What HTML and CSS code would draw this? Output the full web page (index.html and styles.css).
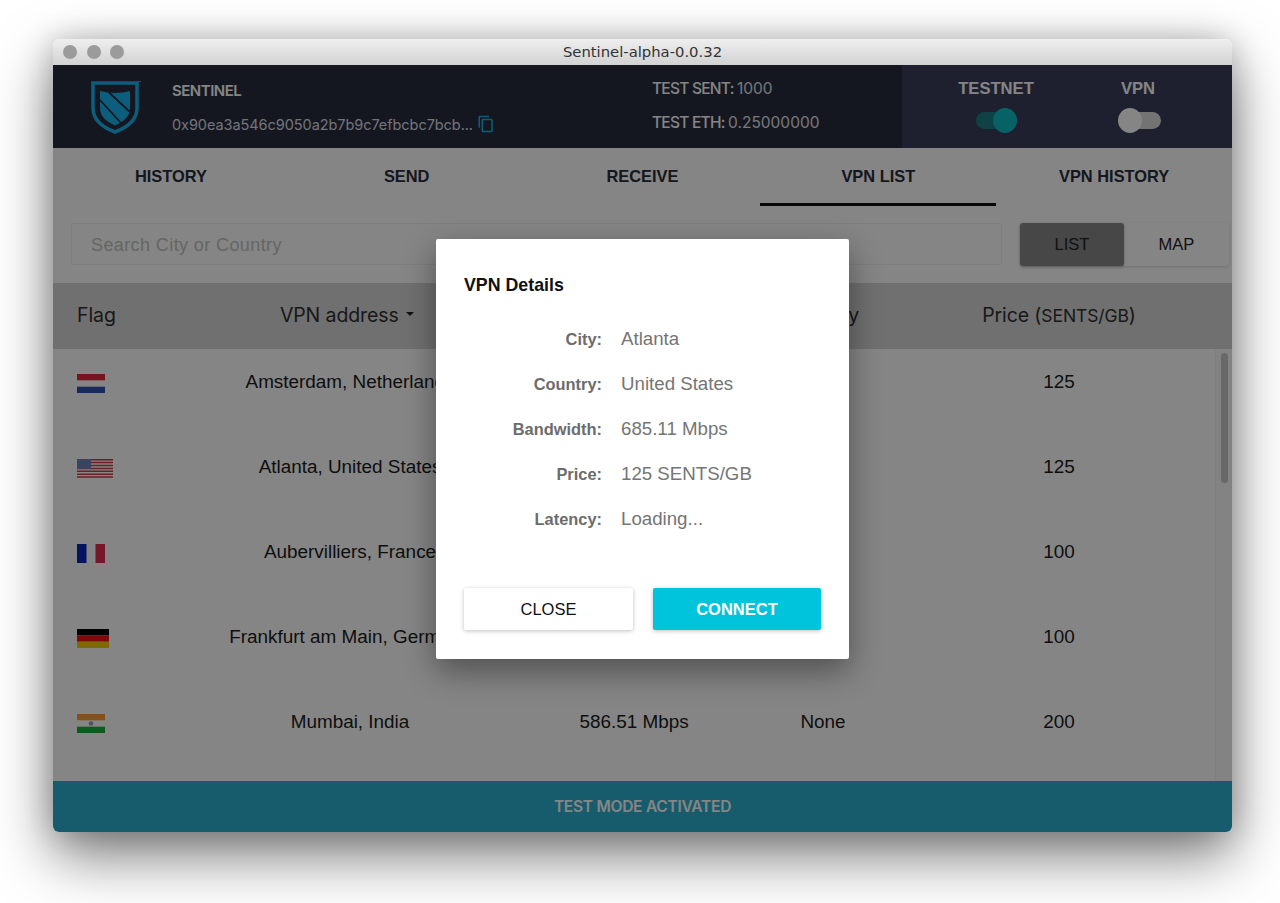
FILE: index.html
```html
<!DOCTYPE html>
<html lang="en">
<head>
<meta charset="utf-8">
<title>Sentinel-alpha-0.0.32</title>
<link rel="stylesheet" href="styles.css">
</head>
<body>
<div class="window">
  <div class="titlebar">
    <div class="lights"><span></span><span></span><span></span></div>
    <div class="title">Sentinel-alpha-0.0.32</div>
  </div>
  <div class="app">
    <header class="header">
      <div class="hdr-main">
        <svg class="logo" viewBox="0 0 50 54">
          <path class="logo-outer" d="M2 3H46V28C46 40 36 47.500 24 52C12 47.500 2 40 2 28Z"/>
          <path class="logo-inner" d="M9 11Q24 15 39 11V28C39 37 32 42 24 45.500C16 42 9 37 9 28Z"/>
          <path class="logo-cut" d="M9 20L30 43M18 12.500L39 32"/>
          <path class="logo-tm" d="M47 1.500H50"/>
        </svg>
        <div class="account">
          <div class="acc-name">SENTINEL</div>
          <div class="acc-addr"><span>0x90ea3a546c9050a2b7b9c7efbcbc7bcb...</span>
            <svg class="copy" viewBox="0 0 24 24"><path d="M16 1H4c-1.100 0-2 .9-2 2v14h2V3h12V1zm3 4H8c-1.100 0-2 .9-2 2v14c0 1.100.9 2 2 2h11c1.100 0 2-.9 2-2V7c0-1.100-.9-2-2-2zm0 16H8V7h11v14z"/></svg>
          </div>
        </div>
        <div class="balances">
          <div>TEST SENT: <span class="bal-val">1000</span></div>
          <div>TEST ETH: <span class="bal-val">0.25000000</span></div>
        </div>
      </div>
      <div class="hdr-side">
        <div class="switch-col">
          <div class="switch-label">TESTNET</div>
          <div class="toggle on"><i></i></div>
        </div>
        <div class="switch-col">
          <div class="switch-label">VPN</div>
          <div class="toggle"><i></i></div>
        </div>
      </div>
    </header>

    <nav class="tabs">
      <div class="tab">HISTORY</div>
      <div class="tab">SEND</div>
      <div class="tab">RECEIVE</div>
      <div class="tab active">VPN LIST</div>
      <div class="tab">VPN HISTORY</div>
    </nav>

    <div class="toolbar">
      <div class="search">Search City or Country</div>
      <div class="seg">
        <div class="seg-btn seg-on">LIST</div>
        <div class="seg-btn">MAP</div>
      </div>
    </div>

    <div class="thead grid">
      <div class="th-flag">Flag</div>
      <div class="th-addr">VPN address <b class="caret"></b></div>
      <div>Bandwidth</div>
      <div>Latency</div>
      <div>Price (<span class="th-unit">SENTS/GB</span>)</div>
    </div>

    <div class="list">
      <div class="rows">
        <div class="row grid">
          <div class="flag-cell"><svg class="flag f-nl" viewBox="0 0 28 19"><rect width="28" height="6.300" fill="#e02a3c"/><rect y="12.700" width="28" height="6.300" fill="#2f4fae"/></svg></div>
          <div>Amsterdam, Netherlands</div><div></div><div></div><div>125</div>
        </div>
        <div class="row grid">
          <div class="flag-cell"><svg class="flag f-us" viewBox="0 0 36 19"><rect width="36" height="19" fill="#fff"/><path d="M0 .7H36M0 3.600H36M0 6.500H36M0 9.400H36M0 12.300H36M0 15.200H36M0 18.100H36" stroke="#c9404e" stroke-width="1.500"/><rect width="14" height="10" fill="#737fb8"/></svg></div>
          <div>Atlanta, United States</div><div></div><div></div><div>125</div>
        </div>
        <div class="row grid">
          <div class="flag-cell"><svg class="flag f-fr" viewBox="0 0 28 19"><rect width="9.500" height="19" fill="#0a26b8"/><rect x="18.500" width="9.500" height="19" fill="#e02c50"/></svg></div>
          <div>Aubervilliers, France</div><div></div><div></div><div>100</div>
        </div>
        <div class="row grid">
          <div class="flag-cell"><svg class="flag f-de" viewBox="0 0 32 19"><rect width="32" height="6.400" fill="#000"/><rect y="6.300" width="32" height="6.400" fill="#ee1414"/><rect y="12.700" width="32" height="6.300" fill="#f2cc00"/></svg></div>
          <div>Frankfurt am Main, Germany</div><div></div><div></div><div>100</div>
        </div>
        <div class="row grid">
          <div class="flag-cell"><svg class="flag f-in" viewBox="0 0 28 19"><rect width="28" height="6.300" fill="#ff9933"/><circle cx="14" cy="9.500" r="2.300" fill="#9a9ab8"/><rect y="12.700" width="28" height="6.300" fill="#1cb038"/></svg></div>
          <div>Mumbai, India</div><div>586.51 Mbps</div><div>None</div><div>200</div>
        </div>
      </div>
      <div class="scroll"><div class="thumb"></div></div>
    </div>

    <footer class="foot">TEST MODE ACTIVATED</footer>

    <div class="overlay">
      <div class="modal">
        <h2 class="m-title">VPN Details</h2>
        <dl class="m-list">
          <dt>City:</dt><dd>Atlanta</dd>
          <dt>Country:</dt><dd>United States</dd>
          <dt>Bandwidth:</dt><dd>685.11 Mbps</dd>
          <dt>Price:</dt><dd>125 SENTS/GB</dd>
          <dt>Latency:</dt><dd>Loading...</dd>
        </dl>
        <div class="m-actions">
          <div class="btn btn-close">CLOSE</div>
          <div class="btn btn-go">CONNECT</div>
        </div>
      </div>
    </div>
  </div>
</div>
</body>
</html>
```
FILE: styles.css
```css
* { box-sizing: border-box; }
html, body { margin: 0; height: 100%; }
body {
  background: #fff;
  padding: 39px 48px 0 53px;
  overflow: hidden;
  font-family: "Liberation Sans", Arial, sans-serif;
}
.window {
  width: 1179px;
  height: 793px;
  display: flex;
  flex-direction: column;
  border-radius: 6px;
  box-shadow: 0 24px 58px rgba(0, 0, 0, .52), 0 0 30px rgba(0, 0, 0, .2);
}
.titlebar {
  height: 26px;
  flex: none;
  padding-bottom: 2px;
  position: relative;
  display: flex;
  align-items: center;
  justify-content: center;
  border-radius: 6px 6px 0 0;
  background: linear-gradient(#efefef, #d2d2d2);
}
.lights {
  position: absolute;
  left: 10px;
  top: 6px;
  display: flex;
  gap: 9.500px;
}
.lights span {
  width: 14px;
  height: 14px;
  border-radius: 50%;
  background: #9b9b9b;
}
.title {
  font: 14.800px "DejaVu Sans", sans-serif;
  color: #333;
}
.app {
  flex: 1;
  position: relative;
  display: flex;
  flex-direction: column;
  min-height: 0;
  background: #fff;
  border-radius: 0 0 6px 6px;
  overflow: hidden;
}

/* header */
.header {
  height: 83px;
  flex: none;
  display: flex;
  color: #fff;
  font-family: Inter, sans-serif;
}
.hdr-main {
  width: 849px;
  display: flex;
  align-items: flex-start;
  padding-left: 38px;
  background: #272c3e;
}
.logo {
  width: 50px;
  height: 54px;
  margin-top: 15px;
  flex: none;
}
.logo-outer { fill: none; stroke: #19b4f0; stroke-width: 3.500; }
.logo-inner { fill: #19b4f0; }
.logo-cut { fill: none; stroke: #272c3e; stroke-width: 1.800; }
.logo-tm { fill: none; stroke: #19b4f0; stroke-width: 1; }
.account {
  width: 480px;
  margin-left: 31px;
  padding-top: 16px;
}
.acc-name {
  font-size: 15px;
  font-weight: 600;
  line-height: 20px;
  letter-spacing: -.5px;
}
.acc-addr {
  display: flex;
  align-items: center;
  gap: 4px;
  margin-top: 13px;
  height: 20px;
  font-size: 14.500px;
  color: #dcdee6;
  letter-spacing: -.06px;
}
.copy { width: 18px; height: 18px; fill: #19b4f0; flex: none; }
.balances {
  padding-top: 14px;
  font-size: 15.500px;
  font-weight: 500;
  line-height: 20px;
  letter-spacing: -.75px;
}
.balances > div + div { margin-top: 14px; }
.bal-val { font-weight: 400; color: #e4e5ea; letter-spacing: 0; }
.hdr-side {
  flex: 1;
  display: grid;
  grid-template-columns: 188px 96px;
  background: #3a3e5c;
}
.switch-col {
  display: flex;
  flex-direction: column;
  align-items: center;
  padding-top: 14px;
}
.switch-label {
  font-family: "Liberation Sans", sans-serif;
  font-size: 16.600px;
  font-weight: 700;
  line-height: 20px;
  color: #fff;
}
.toggle {
  width: 41px;
  height: 17px;
  margin: 13px 0 0 5px;
  position: relative;
  border-radius: 9px;
  background: #dcdcdc;
}
.toggle i {
  position: absolute;
  left: -2px;
  top: -4px;
  width: 24px;
  height: 25px;
  border-radius: 50%;
  background: #fff;
}
.toggle.on { margin-left: 0; background: #1c7f86; }
.toggle.on i { left: 17px; background: #0fbcc4; }

/* tabs */
.tabs {
  height: 58px;
  flex: none;
  display: grid;
  grid-template-columns: repeat(5, 1fr);
  background: #fff;
}
.tab {
  padding-top: 19px;
  text-align: center;
  font-size: 16.400px;
  font-weight: 700;
  line-height: 19px;
  color: #2a2d3c;
}
.tab.active { border-bottom: 3px solid #111; }

/* search */
.toolbar {
  height: 77px;
  flex: none;
  display: flex;
  padding: 17px 3px 0 18px;
}
.search {
  width: 931px;
  height: 42px;
  padding-left: 19px;
  border: 1px solid #f2f2f2;
  border-radius: 3px;
  font-size: 18px;
  line-height: 42px;
  color: #c2c2c2;
  letter-spacing: .4px;
}
.seg {
  margin-left: 18px;
  display: grid;
  grid-template-columns: 104px 105px;
  height: 43px;
  border-radius: 3px;
  box-shadow: 0 1px 3px rgba(0, 0, 0, .15);
}
.seg-btn {
  text-align: center;
  font-size: 16.500px;
  line-height: 43px;
  color: #222;
}
.seg-on {
  background: #888;
  border-radius: 3px;
  box-shadow: 0 1px 3px rgba(0, 0, 0, .25);
}

/* table */
.grid {
  display: grid;
  grid-template-columns: 117px 360px 208px 170px 302px 22px;
  text-align: center;
}
.thead {
  height: 66px;
  padding-bottom: 2px;
  flex: none;
  align-items: center;
  background: #d6d6d6;
  font-family: Inter, sans-serif;
  font-size: 19.500px;
  color: #303030;
  letter-spacing: -.1px;
}
.th-flag { text-align: left; padding-left: 24px; }
.th-addr { padding-right: 6px; }
.th-unit { font-size: 17.500px; }
.caret {
  display: inline-block;
  width: 0;
  height: 0;
  margin: 0 0 5px 2px;
  vertical-align: middle;
  border-left: 4px solid transparent;
  border-right: 4px solid transparent;
  border-top: 4px solid #222;
}
.list {
  flex: 1;
  min-height: 0;
  display: flex;
  overflow: hidden;
}
.rows { flex: 1; min-width: 0; }
.row {
  height: 85px;
  padding-top: 22px;
  font-size: 18.900px;
  line-height: 22px;
  color: #1c1c1c;
  grid-template-columns: 117px 360px 208px 170px 302px;
}
.flag-cell { text-align: left; padding-left: 24px; }
.flag { display: block; height: 19px; margin-top: 3px; }
.f-nl, .f-fr, .f-in { width: 28px; }
.f-us { width: 36px; }
.f-de { width: 32px; }
.scroll {
  width: 17px;
  flex: none;
  padding: 4px 4px 0 5px;
  border-left: 1px solid #f4f4f4;
  background: #fcfcfc;
}
.thumb {
  height: 130px;
  border-radius: 4px;
  background: #c8c8c8;
}
.foot {
  height: 51px;
  flex: none;
  background: #2db1d2;
  text-align: center;
  font-family: Inter, sans-serif;
  font-size: 15.500px;
  font-weight: 600;
  line-height: 52px;
  color: #fff;
  letter-spacing: -.25px;
}

/* dialog */
.overlay {
  position: absolute;
  inset: 0;
  display: flex;
  align-items: center;
  justify-content: center;
  background: rgba(0, 0, 0, .48);
}
.modal {
  width: 413px;
  height: 420px;
  padding: 35px 28px 0;
  background: #fff;
  border-radius: 2px;
  box-shadow: 0 12px 32px rgba(0, 0, 0, .4);
}
.m-title {
  margin: 0;
  font-size: 17.800px;
  font-weight: 700;
  line-height: 22px;
  color: #111;
}
.m-list {
  margin: 32px 0 0;
  display: grid;
  grid-template-columns: 138px 1fr;
  column-gap: 19px;
  row-gap: 23px;
  align-items: baseline;
}
.m-list dt {
  text-align: right;
  font-size: 16.400px;
  font-weight: 700;
  line-height: 22px;
  color: #6c6c6c;
}
.m-list dd {
  margin: 0;
  font-size: 18.700px;
  line-height: 22px;
  color: #757575;
}
.m-actions {
  margin-top: 58px;
  display: grid;
  grid-template-columns: 169px 168px;
  column-gap: 20px;
}
.btn {
  height: 42px;
  text-align: center;
  font-size: 16.500px;
  line-height: 42px;
  border-radius: 2px;
  box-shadow: 0 1px 4px rgba(0, 0, 0, .25);
}
.btn-close { color: #111; background: #fff; }
.btn-go { color: #fff; font-weight: 700; background: #00c3dc; }
```
